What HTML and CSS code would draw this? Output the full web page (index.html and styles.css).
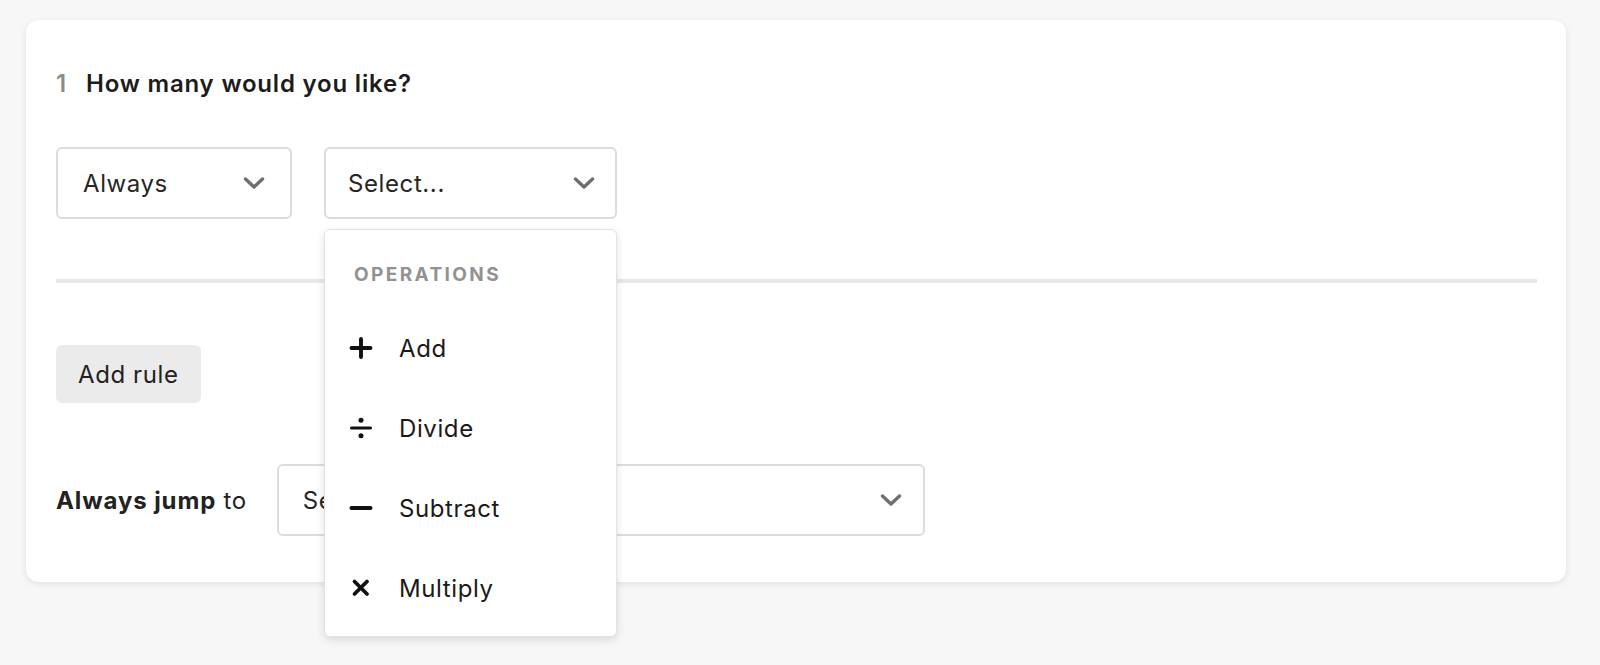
FILE: index.html
```html
<!DOCTYPE html>
<html lang="en">
<head>
<meta charset="utf-8">
<title>Logic</title>
<link rel="stylesheet" href="styles.css">
</head>
<body>
<div class="card">
  <h2 class="title"><span class="num">1</span>How many would you like?</h2>

  <div class="row">
    <div class="select select-always">
      <span class="value">Always</span>
      <svg class="chev" width="22" height="12" viewBox="0 0 22 12"><path d="M2.5 2 L11 10 L19.5 2" fill="none" stroke="#6f6f6f" stroke-width="3.4" stroke-linecap="round" stroke-linejoin="round"/></svg>
    </div>
    <div class="select-wrap">
      <div class="select select-op">
        <span class="value">Select...</span>
        <svg class="chev" width="22" height="12" viewBox="0 0 22 12"><path d="M2.5 2 L11 10 L19.5 2" fill="none" stroke="#6f6f6f" stroke-width="3.4" stroke-linecap="round" stroke-linejoin="round"/></svg>
      </div>
      <div class="menu">
        <div class="menu-header">OPERATIONS</div>
        <div class="menu-item">
          <svg class="op-icon" width="24" height="24" viewBox="0 0 24 24"><path d="M2.5 12 H21.5 M12 3 V21" fill="none" stroke="#111" stroke-width="3.9" stroke-linecap="round"/></svg>
          <span>Add</span>
        </div>
        <div class="menu-item">
          <svg class="op-icon" width="24" height="24" viewBox="0 0 24 24"><path d="M2.5 12 H21.5" fill="none" stroke="#111" stroke-width="3" stroke-linecap="round"/><circle cx="12" cy="4.2" r="2.5" fill="#111"/><circle cx="12" cy="19.8" r="2.5" fill="#111"/></svg>
          <span>Divide</span>
        </div>
        <div class="menu-item">
          <svg class="op-icon" width="24" height="24" viewBox="0 0 24 24"><path d="M2.5 12 H21.5" fill="none" stroke="#111" stroke-width="4" stroke-linecap="round"/></svg>
          <span>Subtract</span>
        </div>
        <div class="menu-item">
          <svg class="op-icon" width="24" height="24" viewBox="0 0 24 24"><path d="M5.5 5.5 L18 18 M18 5.5 L5.5 18" fill="none" stroke="#111" stroke-width="3.8" stroke-linecap="round"/></svg>
          <span>Multiply</span>
        </div>
      </div>
    </div>
  </div>

  <div class="divider"></div>

  <button class="btn">Add rule</button>

  <div class="jump-row">
    <span class="jump-label"><b>Always jump</b> to</span>
    <div class="select select-jump">
      <span class="value">Select...</span>
      <svg class="chev" width="22" height="12" viewBox="0 0 22 12"><path d="M2.5 2 L11 10 L19.5 2" fill="none" stroke="#6f6f6f" stroke-width="3.4" stroke-linecap="round" stroke-linejoin="round"/></svg>
    </div>
  </div>
</div>
</body>
</html>
```
FILE: styles.css
```css
* { box-sizing: border-box; }

html, body {
  margin: 0;
  padding: 0;
  background: #f7f7f7;
}

body {
  font-family: Inter, "Noto Sans", "Liberation Sans", sans-serif;
  color: #222;
  width: 1600px;
  height: 665px;
  overflow: hidden;
  letter-spacing: 0.6px;
}

.card {
  margin: 20px 0 0 26px;
  width: 1540px;
  height: 562px;
  background: #fff;
  border-radius: 13px;
  box-shadow: 0 2px 6px rgba(0, 0, 0, 0.09);
  padding: 50px 29px 0 30px;
}

.title {
  margin: 0;
  font-size: 24px;
  line-height: 28px;
  font-weight: 600;
  letter-spacing: 0.8px;
  color: #1c1c1c;
  display: flex;
  align-items: center;
}

.num {
  color: #8c8c8c;
  width: 30px;
}

.row {
  margin-top: 49px;
  display: flex;
  gap: 32px;
}

.select {
  height: 72px;
  border: 2px solid #dcdcdc;
  border-radius: 6px;
  background: #fff;
  display: flex;
  align-items: center;
  justify-content: space-between;
  font-size: 24px;
  color: #262626;
}

.select-always {
  width: 236px;
  padding: 0 25px 0 25px;
}

.select-op {
  width: 293px;
  padding: 0 20px 0 22px;
}

.select-jump {
  width: 648px;
  padding: 0 21px 0 24px;
}

.chev { display: block; }

.select-wrap {
  position: relative;
}

.menu {
  position: absolute;
  top: 82px;
  left: 0;
  width: 293px;
  background: #fff;
  border: 1px solid #e3e3e3;
  border-radius: 6px;
  box-shadow: 0 3px 8px rgba(0, 0, 0, 0.12);
  padding: 8px 0;
  z-index: 5;
}

.menu-header {
  padding: 27px 29px 23px;
  line-height: 20px;
  font-size: 19px;
  font-weight: 700;
  letter-spacing: 2.4px;
  color: #929292;
}

.menu-item {
  height: 80px;
  display: flex;
  align-items: center;
  padding-left: 24px;
  font-size: 24px;
  color: #1a1a1a;
}

.op-icon {
  display: block;
  margin-right: 26px;
}

.divider {
  margin-top: 60px;
  height: 4px;
  background: #e8e8e8;
}

.btn {
  margin-top: 62px;
  height: 58px;
  padding: 0 22px;
  border: none;
  border-radius: 6px;
  background: #ebebeb;
  font-family: inherit;
  font-size: 24px;
  letter-spacing: 0.6px;
  color: #222;
  display: block;
}

.jump-row {
  margin-top: 61px;
  display: flex;
  align-items: center;
  gap: 30px;
}

.jump-label {
  font-size: 24px;
  color: #222;
}

.jump-label b {
  font-weight: 700;
  letter-spacing: 0.9px;
}
```
